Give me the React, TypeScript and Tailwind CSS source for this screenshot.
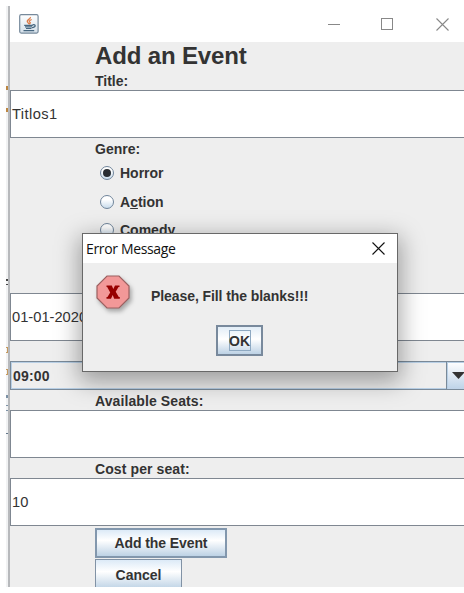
import type { ReactNode } from "react";

const bold = "whitespace-nowrap font-bold text-[14px] leading-[18px] text-[#333]";

function Label({ children, className = "" }: { children: ReactNode; className?: string }) {
  return <div className={`${bold} pl-[85px] ${className}`}>{children}</div>;
}

function Field({ value = "", className = "" }: { value?: string; className?: string }) {
  return (
    <div className={`flex h-12 shrink-0 items-center border-y border-l border-[#7f8791] bg-white pl-px text-[14.7px] text-[#333] ${className}`}>
      {value}
    </div>
  );
}

function Radio({ checked = false, children }: { checked?: boolean; children: ReactNode }) {
  return (
    <div className="flex h-[28.5px] shrink-0 items-center pl-[90px]">
      <span className="flex size-[14px] items-center justify-center rounded-full border border-[#70859b] bg-linear-to-b from-white from-30% to-[#c9dcec]">
        {checked && <span className="size-2 rounded-full bg-[#292d32]" />}
      </span>
      <span className={`${bold} ml-[6px]`}>{children}</span>
    </div>
  );
}

function JavaIcon() {
  return (
    <svg width="20" height="20" viewBox="0 0 20 20" fill="none">
      <defs>
        <linearGradient id="java" x2="0" y2="1">
          <stop stopColor="#fff" />
          <stop offset="1" stopColor="#d3dfe9" />
        </linearGradient>
      </defs>
      <rect x=".7" y=".7" width="18.4" height="18.4" rx="1.5" fill="url(#java)" stroke="#76899b" strokeWidth="1.2" />
      <path d="M11.4 3C12 5 7 6 8.5 8l1.4 2M12.7 5.5c-3 1.2-2.8 2-1.4 3.3l-1 1.6" stroke="#dd7c48" strokeWidth="1.3" />
      <path d="M5.2 11.3h8.5M6 12.8h7M7 14.5h5.5M13.5 10.8c4-.7 3.3 2.5-.5 2.8M4.5 16.7h10.7" stroke="#476780" strokeWidth="1.2" />
    </svg>
  );
}

function Cross({ color }: { color: string }) {
  return (
    <svg width="13" height="13" viewBox="0 0 13 13" fill="none">
      <path d="M.5.5l12 12M12.5.5l-12 12" stroke={color} strokeWidth="1.1" />
    </svg>
  );
}

function ErrorIcon() {
  return (
    <svg width="39" height="39" viewBox="0 0 39 39" className="overflow-visible">
      <path d="M11 1h12l10 10v12L23 33H11L1 23V11z" fill="#f29898" stroke="#9b6060" strokeWidth="1.2" className="drop-shadow-[2px_3px_2px_rgba(0,0,0,0.3)]" />
      <path d="M10.5 10.5h5.3l1.5 3.6 1.7-3.6h4.5v1.6h-1l-2.8 4.6 3.1 5.4h1v1.6h-5.6l-1.5-3.6-1.7 3.6h-4.5v-1.6h1l2.7-4.7-3-5.3h-.7z" fill="#970000" />
    </svg>
  );
}

function Dialog() {
  return (
    <div className="absolute left-[82px] top-[233px] flex h-[139px] w-[316px] flex-col border border-[#686868] bg-[#eeeeee] shadow-[0_7px_22px_3px_rgba(0,0,0,0.34)]">
      <div className="flex h-[29px] shrink-0 items-center justify-between bg-white pl-[3px] pr-3">
        <span className="font-['Open_Sans','Noto_Sans',sans-serif] text-[14px] tracking-[-0.35px] text-[#111]">Error Message</span>
        <Cross color="#111" />
      </div>
      <div className="flex h-[62px] shrink-0 pl-[13px] pt-[12px]">
        <ErrorIcon />
        <span className={`${bold} ml-[16px] mt-[12px] tracking-[-0.08px]`}>Please, Fill the blanks!!!</span>
      </div>
      <div className="ml-[133px] flex h-[31px] w-[47px] items-center justify-center border-2 border-[#78899c] bg-linear-to-b from-[#e2edf7] via-white via-45% to-[#bdd2e5]">
        <span className={`${bold} flex h-[21px] w-[22px] items-center justify-center border border-[#8ea9c2]`}>OK</span>
      </div>
    </div>
  );
}

export default function App() {
  return (
    <div className="relative flex h-[593px] w-[464px] overflow-hidden bg-white pt-[6px] font-['Liberation_Sans',Arial,sans-serif]">
      <div className="ml-[6px] flex h-[581px] w-1 shrink-0 flex-col items-start border-r-2 border-[#b7b9bc] bg-[#f1f2f3]">
        <i className="mt-[80px] h-1 w-[2px] bg-[#bd8742]" />
        <i className="mt-[18px] h-1 w-[2px] bg-[#bd8742]" />
        <i className="mt-[167px] h-[2px] w-[2px] bg-[#444]" />
        <i className="mt-[3px] h-px w-[2px] bg-[#444]" />
        <i className="mt-[62px] h-[6px] w-[2px] border-y border-r border-[#c69a5f]" />
        <i className="mt-[16px] h-[6px] w-[2px] border-y border-r border-[#c69a5f]" />
        <i className="mt-[20px] h-[3px] w-[2px] bg-[#7c91a5]" />
        <i className="mt-[7px] h-[6px] w-[2px] border-y border-[#7c91a5]" />
        <i className="mt-[22px] h-px w-[2px] bg-[#62768a]" />
      </div>
      <div className="flex h-[581px] w-[454px] shrink-0 flex-col overflow-hidden bg-[#eeeeee]">
        <header className="flex h-9 shrink-0 items-center bg-white pl-[9px]">
          <JavaIcon />
          <div className="ml-[289px] h-px w-3 bg-[#888]" />
          <div className="ml-[41px] size-3 border border-[#888]" />
          <div className="ml-[43px] mt-px"><Cross color="#888" /></div>
        </header>
        <h1 className="h-[29px] shrink-0 whitespace-nowrap pl-[85px] text-[24px] font-bold leading-[28px] tracking-[-0.15px] text-[#333]">Add an Event</h1>
        <Label className="h-[19px] shrink-0 leading-[20px]">Title:</Label>
        <Field value="Titlos1" className="tracking-[0.4px]" />
        <Label className="h-[21px] shrink-0 leading-[23px]">Genre:</Label>
        <Radio checked>Horror</Radio>
        <Radio>A<u>c</u>tion</Radio>
        <Radio>Comedy</Radio>
        <Field value="01-01-2020" className="mt-[48.5px]" />
        <div className="mt-5 flex h-[29px] shrink-0 items-center border-y border-l border-[#7a8a99] shadow-[inset_1px_1px_0_#b8cfe5,inset_0_-1px_0_#b8cfe5]">
          <span className={`${bold} flex-1 pl-[2px] tracking-[0.2px]`}>09:00</span>
          <div className="flex h-full w-[18px] items-center border-l border-[#7a8a99] bg-linear-to-b from-white to-[#bed3e8] pl-[5px] shadow-[inset_1px_0_0_#b8cfe5,inset_0_1px_0_#b8cfe5]">
            <svg width="13" height="7" className="shrink-0"><path d="M0 0h13L6.5 7z" fill="#333" /></svg>
          </div>
        </div>
        <Label className="h-[20px] shrink-0 leading-[22px] tracking-[0.1px]">Available Seats:</Label>
        <Field />
        <Label className="h-[20px] shrink-0 leading-[22px] tracking-[0.1px]">Cost per seat:</Label>
        <Field value="10" />
        <button className={`${bold} ml-[85px] mt-[2px] h-[30px] w-[132px] shrink-0 border-2 border-[#8297ad] bg-linear-to-b from-[#dceaf7] via-white via-40% to-[#bdd2e5] tracking-[-0.1px]`}>Add the Event</button>
        <button className={`${bold} ml-[85px] mt-px h-[31px] w-[87px] shrink-0 border border-[#8192a5] bg-linear-to-b from-[#dceaf7] via-white via-40% to-[#bdd2e5]`}>Cancel</button>
      </div>
      <Dialog />
    </div>
  );
}
